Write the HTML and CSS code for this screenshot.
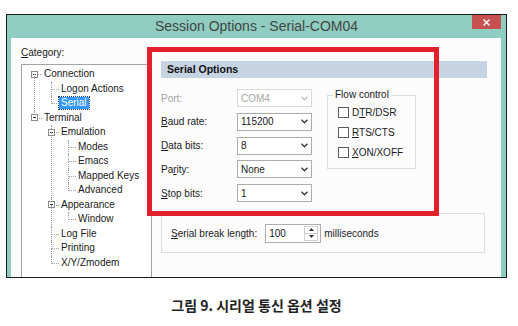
FILE: index.html
```html
<!DOCTYPE html>
<html>
<head>
    <meta charset="utf-8">
    <title>Session Options</title>
    <link rel="stylesheet" href="styles.css">
</head>
<body>

    <div class="window">
        <div class="titlebar">
            <span></span>
            <span class="title">Session Options - Serial-COM04</span>
            <span class="close">
                <svg width="7" height="7" viewBox="0 0 7 7"><path d="M0.5 0.5 L6.5 6.5 M6.5 0.5 L0.5 6.5" stroke="#fff" stroke-width="1.4" fill="none"/></svg>
            </span>
        </div>
        <div class="frame">
            <div class="client">

                <div class="nav">
                    <div class="nav-label"><u>C</u>ategory:</div>
                    <div class="tree">
                        <ul class="root">
                            <li>
                                <div class="row"><span class="slot"><span class="toggle"></span></span><span class="name">Connection</span></div>
                                <ul>
                                    <li><div class="row"><span class="slot"></span><span class="name">Logon Actions</span></div></li>
                                    <li><div class="row"><span class="slot"></span><span class="name selected">Serial</span></div></li>
                                </ul>
                            </li>
                            <li>
                                <div class="row"><span class="slot"><span class="toggle"></span></span><span class="name">Terminal</span></div>
                                <ul>
                                    <li>
                                        <div class="row"><span class="slot"><span class="toggle"></span></span><span class="name">Emulation</span></div>
                                        <ul>
                                            <li><div class="row"><span class="slot"></span><span class="name">Modes</span></div></li>
                                            <li><div class="row"><span class="slot"></span><span class="name">Emacs</span></div></li>
                                            <li><div class="row"><span class="slot"></span><span class="name">Mapped Keys</span></div></li>
                                            <li><div class="row"><span class="slot"></span><span class="name">Advanced</span></div></li>
                                        </ul>
                                    </li>
                                    <li>
                                        <div class="row"><span class="slot"><span class="toggle"></span></span><span class="name">Appearance</span></div>
                                        <ul>
                                            <li><div class="row"><span class="slot"></span><span class="name">Window</span></div></li>
                                        </ul>
                                    </li>
                                    <li><div class="row"><span class="slot"></span><span class="name">Log File</span></div></li>
                                    <li><div class="row"><span class="slot"></span><span class="name">Printing</span></div></li>
                                    <li><div class="row"><span class="slot"></span><span class="name">X/Y/Zmodem</span></div></li>
                                </ul>
                            </li>
                        </ul>
                    </div>
                </div>

                <div class="panel">
                    <div class="panel-head">Serial Options</div>

                    <div class="serial">
                        <div class="fields">
                            <span class="label off">Port:</span>
                            <span class="combo off"><span>COM4</span><svg width="7" height="5" viewBox="0 0 7 5"><polyline points="0.5,0.8 3.5,3.8 6.5,0.8" stroke="#c4c4c4" stroke-width="1.4" fill="none"/></svg></span>

                            <span class="label"><u>B</u>aud rate:</span>
                            <span class="combo"><span>115200</span><svg width="7" height="5" viewBox="0 0 7 5"><polyline points="0.5,0.8 3.5,3.8 6.5,0.8" stroke="#3a3a3a" stroke-width="1.4" fill="none"/></svg></span>

                            <span class="label"><u>D</u>ata bits:</span>
                            <span class="combo"><span>8</span><svg width="7" height="5" viewBox="0 0 7 5"><polyline points="0.5,0.8 3.5,3.8 6.5,0.8" stroke="#3a3a3a" stroke-width="1.4" fill="none"/></svg></span>

                            <span class="label">Pa<u>r</u>ity:</span>
                            <span class="combo"><span>None</span><svg width="7" height="5" viewBox="0 0 7 5"><polyline points="0.5,0.8 3.5,3.8 6.5,0.8" stroke="#3a3a3a" stroke-width="1.4" fill="none"/></svg></span>

                            <span class="label"><u>S</u>top bits:</span>
                            <span class="combo"><span>1</span><svg width="7" height="5" viewBox="0 0 7 5"><polyline points="0.5,0.8 3.5,3.8 6.5,0.8" stroke="#3a3a3a" stroke-width="1.4" fill="none"/></svg></span>
                        </div>

                        <fieldset class="flow">
                            <legend>Flow control</legend>
                            <div class="check"><span class="box"></span><span>D<u>T</u>R/DSR</span></div>
                            <div class="check"><span class="box"></span><span><u>R</u>TS/CTS</span></div>
                            <div class="check"><span class="box"></span><span><u>X</u>ON/XOFF</span></div>
                        </fieldset>
                    </div>

                    <div class="break">
                        <span><u>S</u>erial break length:</span>
                        <span class="spin">
                            <span class="spin-val">100</span>
                            <span class="spin-btns">
                                <span class="spin-btn"><svg width="5" height="3" viewBox="0 0 5 3"><polygon points="2.5,0 5,3 0,3" fill="#333"/></svg></span>
                                <span class="spin-btn down"><svg width="5" height="3" viewBox="0 0 5 3"><polygon points="0,0 5,0 2.5,3" fill="#333"/></svg></span>
                            </span>
                        </span>
                        <span class="unit">milliseconds</span>
                    </div>
                </div>

            </div>
        </div>
    </div>

    <div class="mark"></div>

    <div class="caption">그림 9. 시리얼 통신 옵션 설정</div>

</body>
</html>
```

FILE: styles.css
```css
body{
    margin: 0;
    background-color: #ffffff;
    font-family: "Liberation Sans", Arial, sans-serif;
    font-size: 10px;
    color: #1a1a1a;
}

/* window frame */
div.window{
    box-sizing: border-box;
    width: 501px;
    height: 264px;
    margin: 14px 0 0 6px;
    border: 1px solid #1c1c1c;
    background-color: #8ecdbf;
    display: flex;
    flex-direction: column;
}
div.titlebar{
    height: 23px;
    flex: none;
    display: grid;
    grid-template-columns: 1fr auto 1fr;
    align-items: start;
}
span.title{
    font-size: 14px;
    line-height: 20px;
    padding-top: 1px;
    color: #454545;
}
span.close{
    justify-self: end;
    width: 29px;
    height: 14px;
    margin-right: 5px;
    background-color: #c75050;
    display: flex;
    align-items: center;
    justify-content: center;
}
div.frame{
    flex: 1;
    display: flex;
    padding: 0 5px 0 4px;
    min-height: 0;
}
div.client{
    flex: 1;
    display: flex;
    padding: 8px 0 0 10px;
    background-color: #fcfcfd;
    overflow: hidden;
}

/* category tree */
div.nav{
    width: 131px;
    flex: none;
    display: flex;
    flex-direction: column;
}
div.nav-label{
    line-height: 14px;
    margin-bottom: 4px;
}
div.tree{
    flex: 1;
    border: 1px solid #a3a3a3;
    border-bottom: none;
    padding-top: 2px;
    background-color: #ffffff;
}
div.tree ul{
    list-style: none;
    margin: 0;
    padding: 0 0 0 17px;
}
div.tree ul.root{
    padding-left: 7px;
}
div.tree li{
    position: relative;
}
div.tree li::before{
    content: "";
    position: absolute;
    left: 5px;
    top: 0;
    width: 7px;
    height: 7px;
    border-left: 1px dotted #a0a0a0;
    border-bottom: 1px dotted #a0a0a0;
}
div.tree ul.root > li:first-child::before{
    border-left: none;
}
div.tree li:not(:last-child)::after{
    content: "";
    position: absolute;
    left: 5px;
    top: 7px;
    bottom: 0;
    border-left: 1px dotted #a0a0a0;
}
div.row{
    height: 14.5px;
    display: flex;
    align-items: center;
}
span.slot{
    width: 13px;
    flex: none;
    display: flex;
    align-items: center;
}
span.toggle{
    position: relative;
    box-sizing: border-box;
    width: 7px;
    height: 7px;
    margin-left: 2px;
    border: 1px solid #8a8a8a;
    background-color: #ffffff;
}
span.toggle::after{
    content: "";
    position: absolute;
    left: 1px;
    top: 2px;
    width: 3px;
    height: 1px;
    background-color: #333333;
}
span.name{
    line-height: 12px;
    padding: 0 2px;
    white-space: nowrap;
}
span.selected{
    background-color: #3399ff;
    color: #ffffff;
    outline: 1px dotted #20416e;
}

/* serial options panel */
div.panel{
    width: 326px;
    flex: none;
    margin-left: 9px;
    padding-top: 15px;
}
div.panel-head{
    height: 17px;
    line-height: 17px;
    padding-left: 6px;
    background-color: #c6d3e3;
    font-size: 10.5px;
    font-weight: bold;
    color: #111111;
}
div.serial{
    display: flex;
    align-items: flex-start;
    margin-top: 11px;
}
div.fields{
    display: grid;
    grid-template-columns: 76px 75px;
    grid-auto-rows: 18px;
    row-gap: 5.75px;
    align-items: center;
}
span.label.off{
    color: #a3a3a3;
}
span.combo{
    box-sizing: border-box;
    height: 18px;
    padding: 0 3px;
    border: 1px solid #acacac;
    background-color: #ffffff;
    display: flex;
    align-items: center;
    justify-content: space-between;
}
span.combo.off{
    border-color: #d9d9d9;
    color: #a6a6a6;
}
fieldset.flow{
    box-sizing: border-box;
    width: 89px;
    margin: 0 0 0 15px;
    padding: 1px 6px 6px 5px;
    border: 1px solid #dcdcdc;
}
fieldset.flow legend{
    padding: 0 2px;
    line-height: 12px;
}
div.check{
    height: 20px;
    display: flex;
    align-items: center;
    gap: 3px;
    padding-left: 5px;
    white-space: nowrap;
}
span.box{
    box-sizing: border-box;
    width: 11px;
    height: 11px;
    border: 1px solid #5a5a5a;
    background-color: #ffffff;
}

/* break length group */
div.break{
    box-sizing: border-box;
    width: 324px;
    height: 40px;
    margin-top: 11px;
    padding-left: 9px;
    border: 1px solid #dedede;
    display: flex;
    align-items: center;
}
span.spin{
    box-sizing: border-box;
    width: 56px;
    height: 19px;
    margin-left: 8px;
    padding-left: 3px;
    border: 1px solid #acacac;
    background-color: #ffffff;
    display: flex;
    align-items: center;
}
span.spin-val{
    flex: 1;
}
span.spin-btns{
    box-sizing: border-box;
    width: 14px;
    height: 15px;
    margin-right: 2px;
    border: 1px solid #cfcfcf;
    display: flex;
    flex-direction: column;
}
span.spin-btn{
    flex: 1;
    display: flex;
    align-items: center;
    justify-content: center;
}
span.spin-btn.down{
    border-top: 1px solid #cfcfcf;
}
span.unit{
    margin-left: 3px;
}

/* red annotation box */
div.mark{
    position: absolute;
    left: 147px;
    top: 47px;
    width: 292px;
    height: 169px;
    box-sizing: border-box;
    border: 5px solid #e4202a;
}

div.caption{
    width: 501px;
    margin: 17px 0 0 6px;
    text-align: center;
    font-family: "Noto Sans CJK KR", sans-serif;
    font-size: 14px;
    font-weight: bold;
    line-height: 20px;
    color: #222222;
}
```
